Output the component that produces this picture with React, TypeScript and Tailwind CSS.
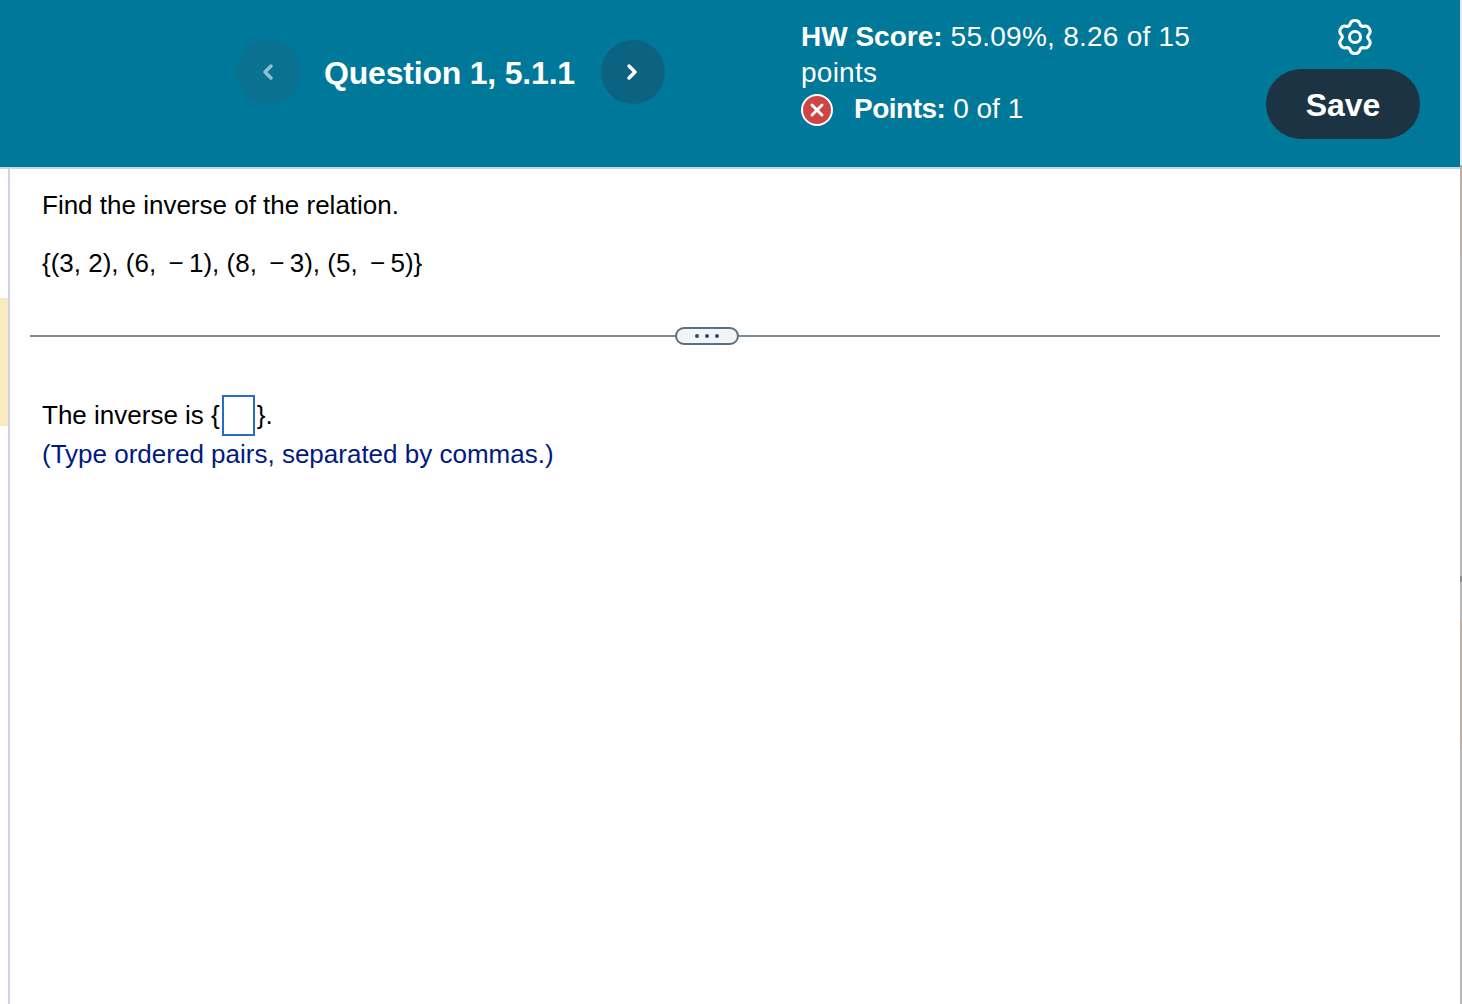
// App.tsx — homework question view: header bar, question stem, answer area
import { ChevronLeft, ChevronRight, X } from 'lucide-react'

// six lobed outline, rounded by running quadratics through the edge midpoints
function gearPath() {
  const pts: [number, number][] = []
  for (let k = 0; k < 6; k++) {
    const a = ((k * 60 - 90) * Math.PI) / 180
    const d = (13 * Math.PI) / 180
    const v = (30 * Math.PI) / 180
    pts.push([18 + 17 * Math.cos(a - d), 18 + 17 * Math.sin(a - d)])
    pts.push([18 + 17 * Math.cos(a + d), 18 + 17 * Math.sin(a + d)])
    pts.push([18 + 11.5 * Math.cos(a + v), 18 + 11.5 * Math.sin(a + v)])
  }
  const mid = (p: [number, number], q: [number, number]) => [(p[0] + q[0]) / 2, (p[1] + q[1]) / 2]
  const start = mid(pts[pts.length - 1], pts[0])
  let d = `M${start[0].toFixed(2)} ${start[1].toFixed(2)}`
  pts.forEach((p, i) => {
    const m = mid(p, pts[(i + 1) % pts.length])
    d += ` Q${p[0].toFixed(2)} ${p[1].toFixed(2)} ${m[0].toFixed(2)} ${m[1].toFixed(2)}`
  })
  return d + 'Z'
}

function GearIcon() {
  return (
    <svg width="36" height="36" viewBox="0 0 36 36" fill="none" stroke="currentColor" strokeWidth="3" className="ml-[71px]">
      <path d={gearPath()} strokeLinejoin="round" />
      <circle cx="18" cy="18" r="5.5" />
    </svg>
  )
}

function EdgeStrip() {
  return (
    <div className="flex w-[2px] shrink-0 flex-col">
      <div className="h-[165px] bg-[#e4e8ea]" />
      <div className="h-[91px] bg-[#bfaea5]" />
      <div className="h-[320px] bg-[#b9b9b9]" />
      <div className="h-[6px] bg-[#8a8a8a]" />
      <div className="h-[38px] bg-[#b9b9b9]" />
      <div className="h-[130px] bg-[#bfaea5]" />
      <div className="flex-1 bg-[#b9b9b9]" />
    </div>
  )
}

function Header() {
  return (
    <header className="flex h-[169px] shrink-0 border-b-2 border-[#c9d6e2] bg-[#00789a] text-white">
      <div className="flex w-[801px] shrink-0 items-start pl-[237px] pt-[40px]">
        <button className="flex h-[64px] w-[64px] items-center justify-center rounded-full bg-[#0a7190] pr-[2px] text-[#8fbfd0]">
          <ChevronLeft size={24} strokeWidth={3.5} />
        </button>
        <h1 className="ml-[23px] mt-[13px] w-[277px] text-[32px] leading-[40px] font-bold tracking-[-0.2px]">Question 1, 5.1.1</h1>
        <button className="flex h-[64px] w-[64px] items-center justify-center rounded-full bg-[#0b6281] pr-[2px] text-white">
          <ChevronRight size={24} strokeWidth={3.5} />
        </button>
      </div>
      <div className="w-[420px] shrink-0 pt-[19px] text-[28px] leading-[36px] tracking-[0.25px]">
        <div>
          <span className="font-bold tracking-normal">HW Score:</span> 55.09%, 8.26 of 15
        </div>
        <div>points</div>
        <div className="flex items-center">
          <span className="mt-[1px] flex h-[32px] w-[32px] items-center justify-center rounded-full border-2 border-white bg-[#cf4444]">
            <X size={20} strokeWidth={3.5} />
          </span>
          <span className="ml-[21px] tracking-normal">
            <span className="font-bold tracking-[-0.5px]">Points:</span> 0 of 1
          </span>
        </div>
      </div>
      <div className="flex flex-1 flex-col items-start pl-[45px] pt-[19px]">
        <GearIcon />
        <button className="mt-[14px] h-[70px] w-[154px] rounded-full bg-[#1c3344] pt-[2px] text-[32px] font-bold">Save</button>
      </div>
    </header>
  )
}

export default function App() {
  return (
    <div className="flex h-screen w-full overflow-hidden bg-white font-['Liberation_Sans',Arial,sans-serif] text-black">
      <div className="flex min-w-0 flex-1 flex-col">
        <Header />
        <div className="flex flex-1">
          {/* Left gutter with highlight marker */}
          <div className="w-[10px] shrink-0 border-r-2 border-[#ccd6e0]">
            <div className="mt-[129px] h-[128px] bg-[#fbeabd]" />
          </div>
          <main className="flex-1 pr-[20px] pl-[20px]">
            <p className="ml-[12px] mt-[20px] text-[26px] leading-[32px]">Find the inverse of the relation.</p>
            <p className="ml-[12px] mt-[26px] text-[26px] leading-[32px] whitespace-pre">
              {'{(3, 2), (6, \u2009\u2212\u20091), (8, \u2009\u2212\u20093), (5, \u2009\u2212\u20095)}'}
            </p>

            <div className="relative mt-[56px] h-[2px] bg-[#7d8a98]">
              <div className="absolute top-[-8px] left-[645px] flex h-[18px] w-[64px] items-center justify-center gap-[6px] rounded-[10px] border-2 border-[#5a6f80] bg-[#f2f5f7]">
                <span className="h-[4px] w-[4px] rounded-full bg-[#3f4a54]" />
                <span className="h-[4px] w-[4px] rounded-full bg-[#3f4a54]" />
                <span className="h-[4px] w-[4px] rounded-full bg-[#3f4a54]" />
              </div>
            </div>

            <div className="ml-[12px] mt-[58px] flex h-[41px] items-center text-[26px] leading-[32px]">
              <span className="mb-[2px] whitespace-pre">{'The inverse is {'}</span>
              <span className="mx-[2px] h-[41px] w-[33px] border-2 border-[#2a6cc4]" />
              <span className="mb-[2px]">{'}.'}</span>
            </div>
            <p className="ml-[12px] text-[26px] leading-[36px] text-[#001a80]">(Type ordered pairs, separated by commas.)</p>
          </main>
        </div>
      </div>
      <EdgeStrip />
    </div>
  )
}
